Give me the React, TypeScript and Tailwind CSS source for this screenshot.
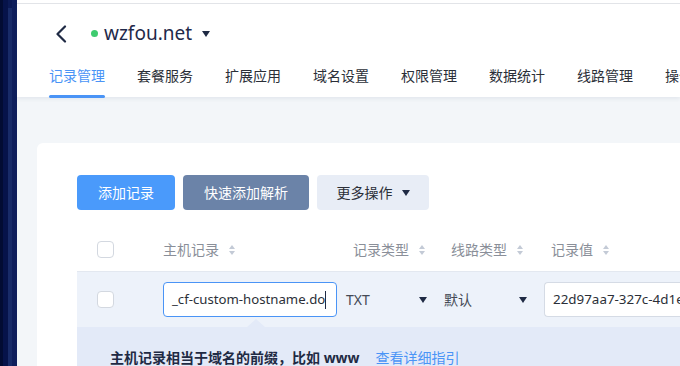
import React from "react";

const font = { fontFamily: '"Noto Sans", "Noto Sans CJK SC", sans-serif' };

function SortIcon() {
  return (
    <svg width="8" height="12" viewBox="0 0 8 12" className="ml-[9px] shrink-0">
      <path d="M4 1 L7 5 L1 5 Z" fill="#c3cad6" />
      <path d="M4 11 L7 7 L1 7 Z" fill="#c3cad6" />
    </svg>
  );
}

function Caret({ className = "" }: { className?: string }) {
  return (
    <svg width="8" height="6" viewBox="0 0 8 6" className={className}>
      <path d="M0 0 L8 0 L4 6 Z" fill="#1f2a44" />
    </svg>
  );
}

function Checkbox() {
  return <div className="w-[17px] h-[17px] rounded-[4px] border border-[#d3d8e0] bg-white" />;
}

const tabs = ["记录管理", "套餐服务", "扩展应用", "域名设置", "权限管理", "数据统计", "线路管理", "操作日志"];

export default function App() {
  return (
    <div className="w-[680px] h-[366px] overflow-hidden flex" style={font}>
      {/* sidebar edge */}
      <div className="w-[17px] shrink-0 flex bg-[#0b1a55]">
        <div className="w-[3px] bg-[#020c33]" />
        <div className="w-[5px] bg-[#06134a]" />
        <div className="w-[4px] bg-[#182b68] mt-[8px]" />
        <div className="flex-1 bg-[#0f1f5c]" />
      </div>

      <div className="flex-1 min-w-0 flex flex-col bg-[#f3f6f9]">
        {/* header */}
        <div className="bg-white pt-[3px] shadow-[0_2px_4px_rgba(40,60,100,0.08)] relative z-10">
          <div className="border-t border-[#e2e4e8] h-[94px] flex flex-col">
            <div className="flex items-center h-[56px] pl-[38px] pt-[4px]">
              <svg width="13" height="18" viewBox="0 0 13 18" className="mr-[23px]">
                <path d="M10 1.5 L2.5 9 L10 16.5" fill="none" stroke="#1f2a44" strokeWidth="2.2" strokeLinecap="round" strokeLinejoin="round" />
              </svg>
              <div className="w-[7px] h-[7px] rounded-full bg-[#3ecb6f] mr-[6px]" />
              <span className="text-[19px] text-[#1f2a4a] leading-none">wzfou.net</span>
              <Caret className="ml-[10px]" />
            </div>
            <div className="flex gap-[32px] pl-[32px] h-[38px] whitespace-nowrap">
              {tabs.map((t, i) => (
                <div key={t} className="relative flex items-start pt-[6px] text-[14px] shrink-0">
                  <span className={i === 0 ? "text-[#4a94f6]" : "text-[#2b2f38]"}>{t}</span>
                  {i === 0 && <div className="absolute left-0 right-0 bottom-[-1px] h-[3px] bg-[#4a94f6] rounded-sm" />}
                </div>
              ))}
            </div>
          </div>
        </div>

        {/* card */}
        <div className="ml-[20px] mt-[46px] flex-1 bg-white rounded-tl-[6px] flex flex-col">
          <div className="flex gap-[8px] pl-[40px] pt-[32px]">
            <button className="w-[98px] h-[35px] rounded-[4px] bg-[#4a9afb] text-white text-[14px]">添加记录</button>
            <button className="w-[126px] h-[35px] rounded-[4px] bg-[#6b83a8] text-white text-[14px]">快速添加解析</button>
            <button className="w-[112px] h-[35px] rounded-[4px] bg-[#e8edf6] text-[#2b2f38] text-[14px] flex items-center justify-center gap-[9px]">
              更多操作
              <Caret />
            </button>
          </div>

          {/* table header */}
          <div className="flex items-center h-[43px] mt-[18px] pl-[40px] text-[14px] text-[#8a8f99] whitespace-nowrap">
            <div className="w-[86px] pl-[20px] shrink-0"><Checkbox /></div>
            <div className="w-[183px] flex items-center shrink-0">主机记录<SortIcon /></div>
            <div className="w-[98px] pl-[7px] flex items-center shrink-0">记录类型<SortIcon /></div>
            <div className="w-[100px] pl-[7px] flex items-center shrink-0">线路类型<SortIcon /></div>
            <div className="pl-[7px] flex items-center shrink-0">记录值<SortIcon /></div>
          </div>

          {/* editing row */}
          <div className="ml-[40px] flex flex-col flex-1">
            <div className="flex items-center h-[56px] bg-[#edf2fa] border-t border-[#e3e8f0] text-[14px] text-[#2b2f38] whitespace-nowrap">
              <div className="w-[86px] pl-[20px] shrink-0"><Checkbox /></div>
              <div className="w-[183px] shrink-0">
                <div className="w-[174px] h-[35px] rounded-[4px] border border-[#4a94f6] bg-white flex items-center pl-[8px] overflow-hidden text-[13.2px]">
                  <span>_cf-custom-hostname.do</span>
                  <span className="w-[1px] h-[18px] bg-[#1f2a44]" />
                </div>
              </div>
              <div className="w-[98px] pr-[17px] flex items-center justify-between shrink-0 text-[#444a55]">
                <span>TXT</span>
                <Caret />
              </div>
              <div className="w-[100px] pr-[17px] flex items-center justify-between shrink-0 text-[#444a55]">
                <span>默认</span>
                <Caret />
              </div>
              <div className="flex-1 min-w-0">
                <div className="h-[35px] rounded-l-[4px] border border-r-0 border-[#d5dbe5] bg-white flex items-center pl-[8px] overflow-hidden text-[13.4px]">
                  22d97aa7-327c-4d1e-9b3a
                </div>
              </div>
            </div>
            <div className="relative flex-1 bg-[#e3eaf8] pl-[33px] pt-[20px] text-[14px] whitespace-nowrap">
              <div className="absolute left-[170px] top-[-8px] w-0 h-0 border-l-[9px] border-r-[9px] border-b-[8px] border-l-transparent border-r-transparent border-b-[#e3eaf8]" />
              <span className="font-bold text-[#1f2a44]">主机记录相当于域名的前缀，比如 www</span>
              <span className="ml-[16px] text-[#4a94f6]">查看详细指引</span>
            </div>
          </div>
        </div>
      </div>
    </div>
  );
}
